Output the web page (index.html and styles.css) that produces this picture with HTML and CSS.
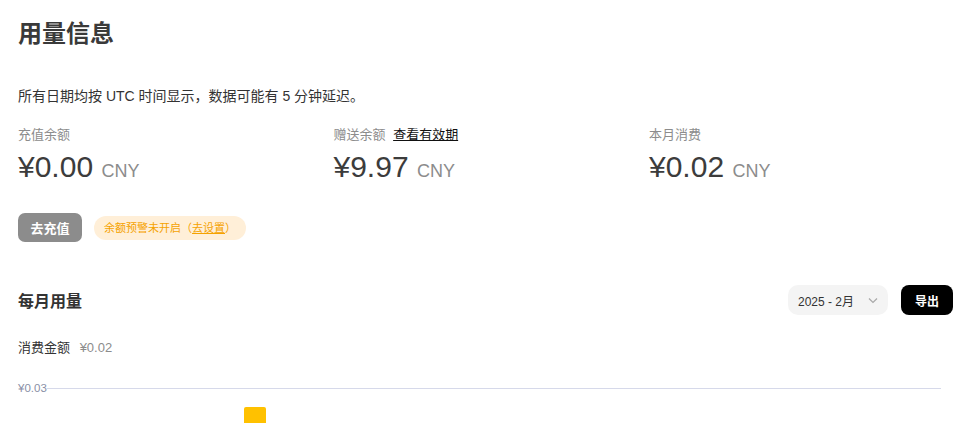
FILE: index.html
```html
<!DOCTYPE html>
<html lang="zh-CN">
<head>
  <meta charset="utf-8">
  <title>用量信息</title>
  <link rel="stylesheet" href="styles.css">
</head>
<body>
  <div class="page">
    <h1 class="title">用量信息</h1>
    <p class="note">所有日期均按 UTC 时间显示，数据可能有 5 分钟延迟。</p>

    <div class="balances">
      <div class="balance">
        <div class="label">充值余额</div>
        <div class="amount">¥0.00 <span class="unit">CNY</span></div>
      </div>
      <div class="balance">
        <div class="label">赠送余额 <a class="link" href="#">查看有效期</a></div>
        <div class="amount">¥9.97 <span class="unit">CNY</span></div>
      </div>
      <div class="balance">
        <div class="label">本月消费</div>
        <div class="amount">¥0.02 <span class="unit">CNY</span></div>
      </div>
    </div>

    <div class="actions">
      <button class="btn-recharge" type="button">去充值</button>
      <span class="warn">余额预警未开启（<a href="#">去设置</a>）</span>
    </div>

    <div class="section-head">
      <h2 class="section-title">每月用量</h2>
      <div class="tools">
        <div class="month-select">
          <span>2025 - 2月</span>
          <svg class="chevron" width="12" height="12" viewBox="0 0 12 12"><path d="M2 4.5 L6 8.5 L10 4.5" fill="none" stroke="#a8a8a8" stroke-width="1.2"/></svg>
        </div>
        <button class="btn-export" type="button">导出</button>
      </div>
    </div>

    <div class="total">消费金额 <span class="total-val">¥0.02</span></div>

    <div class="chart">
      <div class="axis-row">
        <span class="axis-label">¥0.03</span>
        <span class="axis-line"></span>
      </div>
      <div class="plot">
        <div class="bar" style="left: 226px; height: 60px;"></div>
      </div>
    </div>
  </div>
</body>
</html>
```

FILE: styles.css
```css
* {
  box-sizing: border-box;
}

body {
  margin: 0;
  font-family: "Liberation Sans", "Noto Sans CJK SC", sans-serif;
  color: #333;
  background: #fff;
}

.page {
  padding: 0 3px 0 18px;
}

.title {
  margin: 0;
  padding-top: 19px;
  font-size: 24px;
  line-height: 30px;
  font-weight: bold;
  color: #3a3a3a;
}

.note {
  margin: 38px 0 0;
  font-size: 14px;
  line-height: 18px;
  color: #333;
}

.balances {
  display: grid;
  grid-template-columns: repeat(3, 315.5px);
  margin-top: 21px;
}

.label {
  font-size: 13px;
  line-height: 18px;
  color: #8c8c8c;
}

.link {
  margin-left: 4px;
  color: #111;
  text-decoration: underline;
}

.amount {
  margin-top: 5px;
  font-size: 30px;
  line-height: 36px;
  color: #3c3c3c;
}

.unit {
  font-size: 18px;
  color: #8c8c8c;
}

.actions {
  display: flex;
  align-items: center;
  gap: 12px;
  margin-top: 24px;
}

.btn-recharge {
  width: 64px;
  height: 29px;
  border: none;
  border-radius: 7px;
  background: #8c8c8c;
  color: #fff;
  font: bold 13px "Liberation Sans", "Noto Sans CJK SC", sans-serif;
  padding: 0;
}

.warn {
  display: inline-block;
  height: 24px;
  line-height: 24px;
  padding: 0 10px;
  border-radius: 12px;
  background: #ffefd8;
  color: #f5a200;
  font-size: 11px;
}

.warn a {
  color: #f5a200;
}

.section-head {
  display: flex;
  align-items: center;
  justify-content: space-between;
  margin-top: 43px;
}

.section-title {
  margin: 0;
  font-size: 16px;
  font-weight: bold;
  color: #333;
}

.tools {
  display: flex;
  align-items: center;
  gap: 13px;
}

.month-select {
  display: flex;
  align-items: center;
  justify-content: space-between;
  width: 100px;
  height: 30px;
  padding: 0 9px 0 10px;
  border-radius: 10px;
  background: #f4f4f4;
  font-size: 12px;
  color: #333;
}

.btn-export {
  width: 52px;
  height: 30px;
  border: none;
  border-radius: 8px;
  background: #000;
  color: #fff;
  font: bold 12px "Liberation Sans", "Noto Sans CJK SC", sans-serif;
  padding: 0;
}

.total {
  margin-top: 24px;
  font-size: 13px;
  line-height: 18px;
  color: #333;
}

.total-val {
  margin-left: 6px;
  color: #8c8c8c;
}

.chart {
  margin-top: 24px;
  padding-right: 12px;
}

.axis-row {
  display: flex;
  align-items: center;
  height: 14px;
}

.axis-label {
  font-size: 11.5px;
  color: #8a8fa6;
}

.axis-line {
  flex: 1;
  height: 1px;
  background: #d6d9ea;
}

.plot {
  position: relative;
  height: 60px;
  overflow: hidden;
}

.bar {
  position: absolute;
  top: 12px;
  width: 22px;
  background: #ffc100;
  border-radius: 2px 2px 0 0;
}
```
